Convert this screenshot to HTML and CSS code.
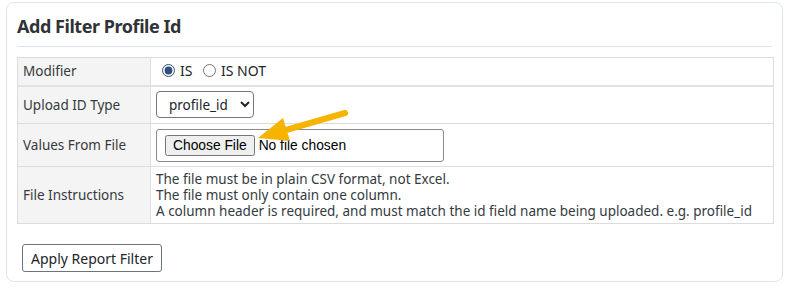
FILE: index.html
```html
<!DOCTYPE html>
<html>
<head>
<meta charset="utf-8">
<link rel="stylesheet" href="styles.css">
</head>
<body>
<div class="card">
  <h2 class="title">Add Filter Profile Id</h2>
  <div class="rule"></div>
  <table class="form-table">
    <tr class="row-mod">
      <th>Modifier</th>
      <td>
        <label class="radio"><input type="radio" name="mod" checked>IS</label>
        <label class="radio"><input type="radio" name="mod">IS NOT</label>
      </td>
    </tr>
    <tr class="row-type">
      <th>Upload ID Type</th>
      <td>
        <select class="sel"><option>profile_id</option></select>
      </td>
    </tr>
    <tr class="row-file">
      <th>Values From File</th>
      <td>
        <div class="file-box"><input type="file" class="file"></div>
      </td>
    </tr>
    <tr class="row-inst">
      <th>File Instructions</th>
      <td class="inst">The file must be in plain CSV format, not Excel.<br>The file must only contain one column.<br>A column header is required, and must match the id field name being uploaded. e.g. profile_id</td>
    </tr>
  </table>
  <div class="actions">
    <button class="apply">Apply Report Filter</button>
  </div>
  <svg class="arrow" width="100" height="44" viewBox="0 0 100 44">
    <line x1="93" y1="10" x2="34" y2="27" stroke="#f6b300" stroke-width="6" stroke-linecap="round"/>
    <polygon points="6,35 31,15 38,38" fill="#f6b300"/>
  </svg>
</div>
</body>
</html>
```
FILE: styles.css
```css
html, body {
  margin: 0;
  padding: 0;
  background: #ffffff;
}
body {
  font-family: "Noto Sans", "Open Sans", sans-serif;
  color: #343a40;
  font-size: 14px;
}
.card {
  position: relative;
  margin: 2px 11px 0 6px;
  width: 777px;
  height: 280px;
  box-sizing: border-box;
  border: 1px solid #dfe5ec;
  border-radius: 8px;
  padding: 0 10px 0 10px;
}
.title {
  margin: 0;
  padding-top: 11px;
  height: 33px;
  box-sizing: border-box;
  font-size: 18px;
  font-weight: 700;
  line-height: 24px;
  color: #2f3337;
  letter-spacing: -0.45px;
}
.rule {
  height: 1px;
  background: #dde4ea;
  margin-top: 10px;
  margin-bottom: 10px;
}
.form-table {
  width: 757px;
  border-collapse: collapse;
  border: 1px solid #dcdcdc;
}
.form-table th, .form-table td {
  border: 1px solid #dcdcdc;
  text-align: left;
  vertical-align: middle;
  font-size: 13.5px;
  font-weight: 400;
  color: #343a40;
}
.form-table th {
  width: 122px;
  background: #f4f4f4;
  padding: 0 5px;
}
.form-table td {
  padding: 0 5px;
}
.row-mod { height: 28px; }
.row-mod th, .row-mod td { border-bottom: 2px solid #e2e2e2; }
.row-type { height: 38px; }
.row-file { height: 43px; }
.row-inst { height: 57px; }
.radio {
  display: inline-flex;
  align-items: center;
  font-size: 14px;
  color: #212529;
}
.radio input {
  margin: 0 5px 0 6px;
  width: 13px;
  height: 13px;
  accent-color: #2f4f7f;
}
.radio + .radio { margin-left: 1px; }
.sel {
  font-family: "Noto Sans", sans-serif;
  font-size: 13.5px;
  color: #212529;
  height: 27px;
  width: 98px;
  border: 1px solid #767676;
  border-radius: 4px;
  background: #fff;
  padding: 0 4px 0 8px;
}
.file-box {
  width: 288px;
  height: 33px;
  box-sizing: border-box;
  border: 1px solid #8a8a8a;
  border-radius: 3px;
  display: flex;
  align-items: center;
  padding-left: 8px;
}
.file {
  font-family: "Liberation Sans", Arial, sans-serif;
  font-size: 13.8px;
  color: #000;
}
.inst {
  line-height: 16px;
  padding-top: 4px !important;
  padding-bottom: 4px !important;
}
.actions {
  margin-top: 20px;
  padding-left: 5px;
}
.apply {
  font-family: "Noto Sans", sans-serif;
  font-size: 14px;
  color: #212529;
  background: #fff;
  border: 1px solid #6c757d;
  border-radius: 3px;
  height: 28px;
  width: 140px;
  padding: 0;
}
.arrow {
  position: absolute;
  left: 245px;
  top: 100px;
}
```
